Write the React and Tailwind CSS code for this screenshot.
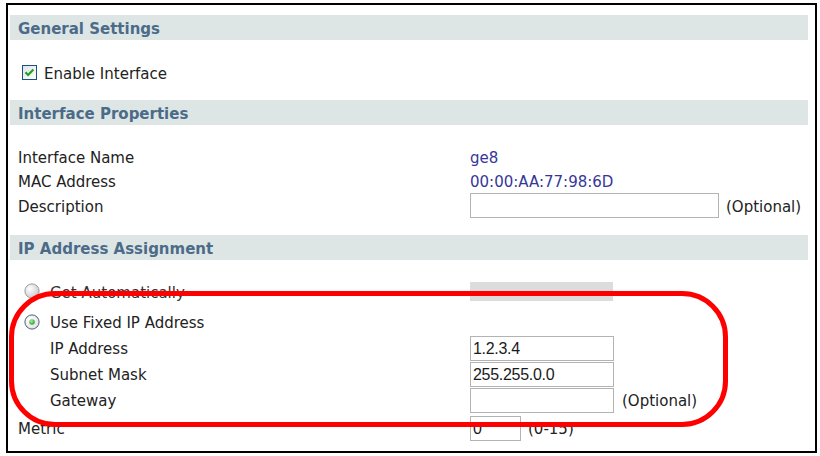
import React from 'react';

const Band = ({ children }) => (
  <div className="h-[25px] flex items-center pl-[8px] pt-[3px] bg-[#dee6e5] font-bold text-[#4b6b89]">{children}</div>
);

const Radio = ({ checked, id }) => (
  <svg width="16" height="16" viewBox="0 0 16 16" className="shrink-0">
    <defs>
      <radialGradient id={`rg-${id}`} cx="35%" cy="35%" r="70%">
        <stop offset="0%" stopColor="#ffffff" />
        <stop offset="100%" stopColor={checked ? '#dfe2e7' : '#c9cacf'} />
      </radialGradient>
      <radialGradient id={`dot-${id}`} cx="40%" cy="35%" r="70%">
        <stop offset="0%" stopColor="#a8f0a0" />
        <stop offset="100%" stopColor="#1f9a1f" />
      </radialGradient>
    </defs>
    <circle cx="8" cy="8" r="7.1" fill={`url(#rg-${id})`} stroke={checked ? '#4f6175' : '#9a9ca2'} strokeWidth="1" />
    {checked && <circle cx="8" cy="8" r="2.8" fill={`url(#dot-${id})`} />}
  </svg>
);

const Checkbox = () => (
  <svg width="15" height="15" viewBox="0 0 15 15" className="shrink-0">
    <defs>
      <linearGradient id="cbg" x1="0" y1="0" x2="1" y2="1">
        <stop offset="0%" stopColor="#dfe3e8" />
        <stop offset="100%" stopColor="#ffffff" />
      </linearGradient>
    </defs>
    <rect x="0.5" y="0.5" width="14" height="14" fill="url(#cbg)" stroke="#1c5180" />
    <path d="M3.5 7.2 L6.1 9.9 L11.4 4.4" fill="none" stroke="#21a121" strokeWidth="2.2" />
  </svg>
);

const Input = ({ value = '', w }) => (
  <div className={`${w} h-[25px] border border-[#b3b3b3] bg-white flex items-center pl-[2px] pt-[1px] font-['Liberation_Sans',Arial,sans-serif] text-[16px] text-[#1a1a1a] tracking-[-0.3px]`}>
    {value}
  </div>
);

const Row = ({ label, indent, h = 'h-[24px]', className = '', children }) => (
  <div className={`flex items-center ${h} ${className}`}>
    <div className={`w-[460px] pt-[3px] ${indent ? 'pl-[40px]' : 'pl-[8px]'}`}>{label}</div>
    <div className="flex items-center">{children}</div>
  </div>
);

export default function App() {
  return (
    <div className="relative w-[820px] h-[456px] bg-white font-['DejaVu_Sans',Verdana,sans-serif] text-[15px] leading-none text-[#222]">
      <div className="pl-[6px] pt-[3px]">
        <div className="w-[811px] h-[450px] border-2 border-black pl-[2px] pr-[7px] pt-[10px]">
          <Band>General Settings</Band>
          <div className="mt-[20px] h-[25px] flex items-center pl-[12px]">
            <Checkbox />
            <span className="ml-[7px] pt-[3px]">Enable Interface</span>
          </div>

          <div className="mt-[15px]">
            <Band>Interface Properties</Band>
          </div>
          <div className="mt-[20px]">
            <Row label="Interface Name">
              <span className="pt-[2px] text-[#37379a]">ge8</span>
            </Row>
            <Row label="MAC Address">
              <span className="pt-[2px] text-[#37379a]">00:00:AA:77:98:6D</span>
            </Row>
            <Row label="Description" h="h-[25px]">
              <Input w="w-[249px]" />
              <span className="ml-[7px] pt-[3px]">(Optional)</span>
            </Row>
          </div>

          <div className="mt-[17px]">
            <Band>IP Address Assignment</Band>
          </div>
          <div className="mt-[21px] h-[20px] flex items-center">
            <div className="w-[460px] pl-[14px] flex items-center">
              <Radio id="auto" />
              <span className="ml-[10px] pt-[4px] text-[#333]">Get Automatically</span>
            </div>
            <div className="w-[143px] h-[19px] bg-[#dcdcdc]" />
          </div>
          <div className="mt-[9px] h-[24px] flex items-center pl-[14px]">
            <Radio id="fixed" checked />
            <span className="ml-[10px] pt-[3px]">Use Fixed IP Address</span>
          </div>
          <Row label="IP Address" indent h="h-[26px]" className="mt-[1px]">
            <Input w="w-[144px]" value="1.2.3.4" />
          </Row>
          <Row label="Subnet Mask" indent h="h-[26px]">
            <Input w="w-[144px]" value="255.255.0.0" />
          </Row>
          <Row label="Gateway" indent h="h-[26px]">
            <Input w="w-[144px]" />
            <span className="ml-[8px] pt-[3px]">(Optional)</span>
          </Row>
          <Row label="Metric" h="h-[26px]" className="mt-[2px]">
            <Input w="w-[51px]" value="0" />
            <span className="ml-[7px] pt-[3px]">(0-15)</span>
          </Row>
        </div>
      </div>

      <div className="absolute left-[9px] top-[291px] w-[719px] h-[136px] border-[5px] border-[#ff0000] rounded-[46px] pointer-events-none" />
    </div>
  );
}
